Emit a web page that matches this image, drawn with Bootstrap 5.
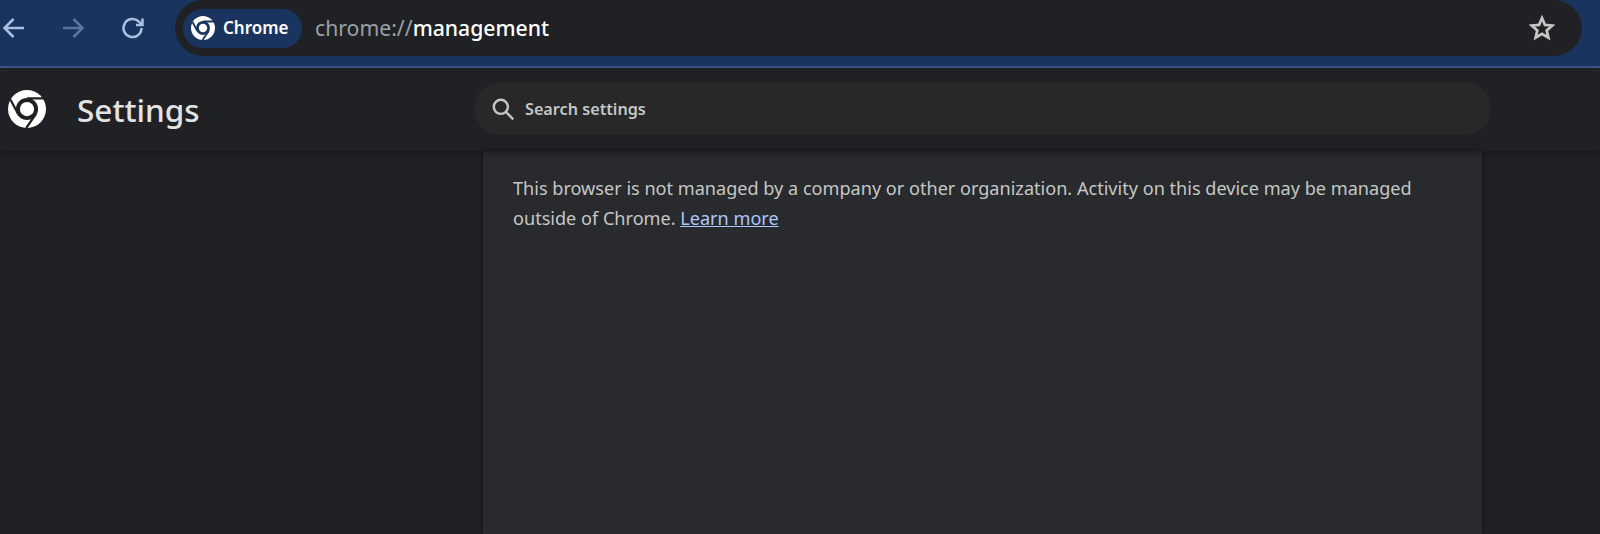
<!DOCTYPE html>
<html lang="en">
<head>
  <meta charset="UTF-8">
  <title>Settings - Management</title>
  <link href="https://cdn.jsdelivr.net/npm/bootstrap@5.3.0/dist/css/bootstrap.min.css" rel="stylesheet">
  <style>
    html, body {
      height: 100%;
      overflow: hidden;
    }
    body {
      background: #202124;
      font-family: "Noto Sans", "Open Sans", sans-serif;
    }
    .browser-bar {
      height: 68px;
      background: #19355f;
      border-bottom: 2px solid #3c5a87;
      padding-bottom: 10px;
    }
    .nav-btn {
      width: 24px;
      height: 24px;
      stroke: #a9c0e0;
      fill: none;
      stroke-width: 2.500;
      overflow: visible;
    }
    .nav-btns {
      width: 175px;
      padding-left: 1px;
      gap: 35px;
    }
    .nav-off {
      opacity: .45;
    }
    .omnibox {
      width: 1407px;
      background: #202124;
      border-radius: 28px;
      padding: 0 27px 0 8px;
    }
    .site-chip {
      width: 119px;
      height: 39px;
      background: #19355f;
      color: #fff;
      font-size: 17px;
      font-weight: 600;
      border-radius: 20px;
      padding-left: 8px;
      gap: 8px;
    }
    .url-text {
      color: #fff;
      font-size: 21.200px;
      font-weight: 500;
      margin-left: 13px;
    }
    .url-scheme {
      color: #9aa0a6;
      font-weight: 400;
    }
    .settings-bar {
      height: 83px;
      padding-bottom: 2px;
      box-shadow: 0 2px 6px rgba(0, 0, 0, .3);
      position: relative;
      z-index: 1;
    }
    .brand-area {
      width: 474px;
      padding-left: 8px;
    }
    .brand-title {
      color: #e3e3e3;
      font-size: 31.500px;
      font-weight: 500;
      margin-left: 31px;
      padding-top: 3px;
    }
    .search-box {
      width: 1017px;
      height: 53px;
      background: #282828;
      border-radius: 27px;
      color: #c4c7c5;
      font-size: 16.200px;
      font-weight: 600;
      padding-left: 16px;
      gap: 9px;
    }
    .search-label {
      padding-top: 2px;
    }
    .page-body {
      height: 383px;
    }
    .manage-card {
      width: 999px;
      margin-left: 483px;
      background: #292a2d;
      box-shadow: 0 0 6px rgba(0, 0, 0, .4);
      color: #c4c7c5;
      font-size: 18.100px;
      line-height: 30px;
      padding: 22px 30px;
    }
    .manage-card a {
      color: #a8c7fa;
    }
  </style>
</head>
<body>
  <!-- browser toolbar -->
  <div class="browser-bar d-flex align-items-center">
    <div class="nav-btns d-flex align-items-center">
      <svg class="nav-btn" viewBox="0 0 24 24"><path d="M23 12H4M12.500 3 3.500 12l9 9"/></svg>
      <svg class="nav-btn nav-off" viewBox="0 0 24 24"><path d="M3 12h19M13.500 3l9 9-9 9"/></svg>
      <svg class="nav-btn" viewBox="0 0 24 24"><path d="M22.500 12a9 9 0 1 1-2.600-6.300L23 8.500"/><path d="M23.500 2.500V9H17"/></svg>
    </div>
    <div class="omnibox d-flex align-items-center h-100">
      <div class="site-chip d-flex align-items-center">
        <svg width="24" height="24" viewBox="0 0 24 24"><circle cx="12" cy="12" r="12" fill="#fff"/><circle cx="12" cy="12" r="7" fill="#19355f"/><circle cx="12" cy="12" r="4.200" fill="#fff"/><path d="M12 5.500h11M6.400 15.200 1.500 6M17.600 15.200 11.500 24" stroke="#19355f" stroke-width="1.800" fill="none"/></svg>
        <span>Chrome</span>
      </div>
      <div class="url-text"><span class="url-scheme">chrome://</span>management</div>
      <svg class="ms-auto" width="26" height="26" viewBox="0 0 24 24" fill="none" stroke="#c4c7c5" stroke-width="2.500"><path d="M12 2.800l2.700 6.300 6.800.6-5.200 4.500 1.600 6.700L12 17.300l-5.900 3.600 1.600-6.700-5.200-4.500 6.800-.6z"/></svg>
    </div>
  </div>

  <!-- settings header -->
  <div class="settings-bar d-flex align-items-center">
    <div class="brand-area d-flex align-items-center">
      <svg width="38" height="38" viewBox="0 0 24 24"><circle cx="12" cy="12" r="12" fill="#fff"/><circle cx="12" cy="12" r="7" fill="#202124"/><circle cx="12" cy="12" r="4.500" fill="#fff"/><path d="M12 5.300h11M6.400 15.200 1.500 6M17.600 15.200 11.500 24" stroke="#202124" stroke-width="1.400" fill="none"/></svg>
      <span class="brand-title">Settings</span>
    </div>
    <div class="search-box d-flex align-items-center">
      <svg width="26" height="26" viewBox="0 0 24 24" fill="none" stroke="#c4c7c5" stroke-width="2.200"><circle cx="10" cy="10" r="6.500"/><path d="M15 15l6.500 6.500"/></svg>
      <span class="search-label">Search settings</span>
    </div>
  </div>

  <!-- page content -->
  <div class="page-body d-flex">
    <div class="manage-card">
      This browser is not managed by a company or other organization. Activity on this device may be managed outside of Chrome. <a href="#">Learn more</a>
    </div>
  </div>
  <script src="https://cdn.jsdelivr.net/npm/bootstrap@5.3.0/dist/js/bootstrap.bundle.min.js"></script>
</body>
</html>
